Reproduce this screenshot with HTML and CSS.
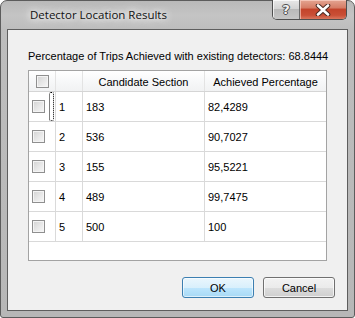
FILE: index.html
```html
<!DOCTYPE html>
<html>
<head>
<meta charset="utf-8">
<link rel="stylesheet" href="styles.css">
</head>
<body>
<div class="window">
  <div class="titlebar">
    <span class="title">Detector Location Results</span>
    <div class="caption-buttons">
      <div class="cap-btn help"><span class="help-glyph">?</span></div>
      <div class="cap-btn close">
        <svg width="16" height="12" viewBox="0 0 16 12"><path d="M3 1.5 L13 10.5 M13 1.5 L3 10.5" stroke="#4a2a22" stroke-width="4.6" stroke-linecap="round"/><path d="M3 1.5 L13 10.5 M13 1.5 L3 10.5" stroke="#ffffff" stroke-width="2.6" stroke-linecap="round"/></svg>
      </div>
    </div>
  </div>
  <div class="client">
    <div class="summary">Percentage of Trips Achieved with existing detectors: 68.8444</div>
    <div class="table">
      <div class="row head">
        <div class="cell c1 center"><span class="checkbox"></span></div>
        <div class="cell c2"></div>
        <div class="cell c3 center">Candidate Section</div>
        <div class="cell c4 center">Achieved Percentage</div>
      </div>
      <div class="row">
        <div class="cell c1"><span class="checkbox"></span><span class="focus"></span></div>
        <div class="cell c2">1</div>
        <div class="cell c3">183</div>
        <div class="cell c4">82,4289</div>
      </div>
      <div class="row">
        <div class="cell c1"><span class="checkbox"></span></div>
        <div class="cell c2">2</div>
        <div class="cell c3">536</div>
        <div class="cell c4">90,7027</div>
      </div>
      <div class="row">
        <div class="cell c1"><span class="checkbox"></span></div>
        <div class="cell c2">3</div>
        <div class="cell c3">155</div>
        <div class="cell c4">95,5221</div>
      </div>
      <div class="row">
        <div class="cell c1"><span class="checkbox"></span></div>
        <div class="cell c2">4</div>
        <div class="cell c3">489</div>
        <div class="cell c4">99,7475</div>
      </div>
      <div class="row">
        <div class="cell c1"><span class="checkbox"></span></div>
        <div class="cell c2">5</div>
        <div class="cell c3">500</div>
        <div class="cell c4">100</div>
      </div>
    </div>
    <div class="buttons">
      <div class="btn default">OK</div>
      <div class="btn">Cancel</div>
    </div>
  </div>
</div>
</body>
</html>
```
FILE: styles.css
```css
* { box-sizing: border-box; }
html, body { margin: 0; padding: 0; background: #ffffff; }
body { width: 355px; height: 318px; overflow: hidden; font-family: "Liberation Sans", Arial, sans-serif; font-size: 11px; color: #000; }

.window {
  width: 355px;
  height: 318px;
  border: 1px solid #5c5c5c;
  border-radius: 7px 7px 3px 3px;
  background: linear-gradient(to bottom, #b9b9b9 0px, #c4c4c4 14px, #bdbdbd 29px, #b7b7b7 100%);
  padding: 0 6px 6px 6px;
  display: flex;
  flex-direction: column;
}

.titlebar {
  height: 28px;
  display: flex;
  align-items: flex-start;
}
.title {
  font-family: "Open Sans", "Noto Sans", sans-serif;
  font-size: 11.5px;
  margin-left: 23px;
  margin-top: 6px;
  color: #111;
  text-shadow: 0 0 6px #ffffff, 0 0 10px #ffffff, 0 0 14px #f0f0f0;
}
.caption-buttons {
  margin-left: auto;
  margin-top: -1px;
  margin-right: 1px;
  display: flex;
  height: 20px;
  border: 1px solid #4f4f4f;
  border-top: none;
  border-radius: 0 0 5px 5px;
  overflow: hidden;
}
.cap-btn {
  height: 19px;
  display: flex;
  align-items: center;
  justify-content: center;
}
.help {
  width: 27px;
  background: linear-gradient(to bottom, #e8e8e8 0%, #d4d4d4 45%, #b9b9b9 50%, #c6c6c6 100%);
  border-right: 1px solid #6c6c6c;
  box-shadow: inset 1px 1px 0 rgba(255,255,255,0.7);
}
.help-glyph {
  font-family: "DejaVu Sans", sans-serif;
  font-weight: bold;
  font-size: 13px;
  color: #f4f4f4;
  text-shadow: 0 0 1px #333, 1px 0 0 #555, -1px 0 0 #555, 0 1px 0 #555, 0 -1px 0 #555;
  line-height: 1;
}
.close {
  width: 46px;
  background: linear-gradient(to bottom, #e4a592 0%, #d67e67 40%, #c3442b 50%, #c94f36 80%, #d9765d 100%);
  box-shadow: inset 1px 1px 0 rgba(255,220,210,0.6);
}

.client {
  flex: 1;
  border: 1px solid #5e5e5e;
  background: #f0f0f0;
  display: flex;
  flex-direction: column;
  padding: 19px 12px 12px 20px;
}

.summary {
  line-height: 14px;
  height: 14px;
  white-space: nowrap;
}

.table {
  margin-top: 7px;
  width: 299px;
  height: 191px;
  border: 1px solid #a3a3a3;
  background: #ffffff;
  display: flex;
  flex-direction: column;
}
.row {
  display: flex;
  height: 30px;
  border-bottom: 1px solid #d9d9d9;
}
.row.head {
  height: 21px;
  background: linear-gradient(to bottom, #ffffff 0%, #f7f8f9 50%, #f1f2f3 100%);
  border-bottom: 1px solid #d5d5d5;
}
.cell {
  display: flex;
  align-items: center;
  padding-left: 3px;
  border-right: 1px solid #dadada;
  white-space: nowrap;
}
.row.head .cell { border-right-color: #e3e3e3; padding-top: 1px; }
.cell.center { justify-content: center; padding-left: 0; }
.c1 { width: 27px; }
.c2 { width: 27px; }
.c3 { width: 122px; }
.c4 { width: 121px; border-right: none; }

.checkbox {
  width: 13px;
  height: 13px;
  border: 1px solid #8f8f8f;
  background: linear-gradient(135deg, #d2d2d2 0%, #e6e6e6 50%, #f7f7f7 100%);
  box-shadow: inset 0 0 0 1px #f4f4f4;
  flex: none;
}
.row.head .checkbox { margin-left: 1px; }
.focus {
  width: 5px;
  align-self: stretch;
  margin-left: 4px;
  border: 1px dotted #000;
  border-radius: 2px;
}

.buttons {
  margin-top: auto;
  display: flex;
  justify-content: flex-end;
  gap: 9px;
}
.btn {
  width: 72px;
  height: 21px;
  border: 1px solid #707070;
  border-radius: 3px;
  background: linear-gradient(to bottom, #f2f2f2 0%, #ebebeb 50%, #dddddd 50%, #cfcfcf 100%);
  box-shadow: inset 0 0 0 1px rgba(255,255,255,0.7);
  display: flex;
  align-items: center;
  justify-content: center;
}
.btn.default {
  border-color: #3c7fb1;
  background: linear-gradient(to bottom, #eaf6fd 0%, #d9f0fc 50%, #bee6fd 50%, #a7d9f5 100%);
  box-shadow: inset 0 0 0 1px rgba(255,255,255,0.6);
}
```
